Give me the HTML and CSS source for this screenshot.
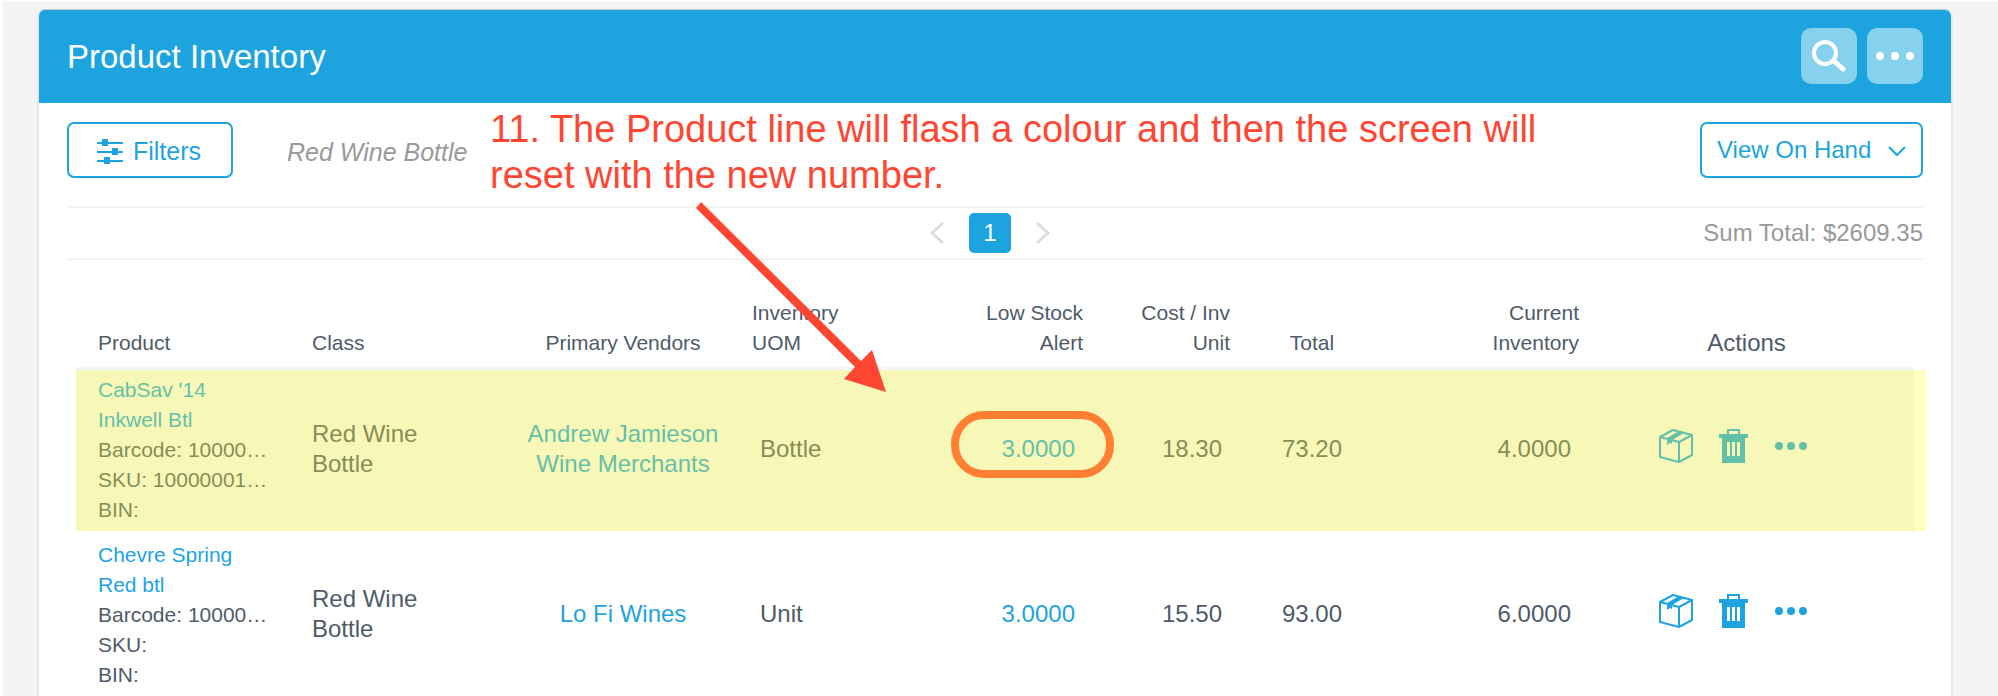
FILE: index.html
```html
<!DOCTYPE html>
<html lang="en">
<head>
  <meta charset="UTF-8">
  <meta name="viewport" content="width=device-width, initial-scale=1.0">
  <title>Product Inventory</title>
  <link rel="stylesheet" href="styles.css">
</head>
<body>

  <!-- Icons used more than once -->
  <svg class="icon-defs" aria-hidden="true">
    <symbol id="icon-box" viewBox="0 0 34 34">
      <path d="M14 1 L33 6 V26 L20 33 L1 28 V8 Z M1 8 L20 13 L33 6 M20 13 V33" fill="none" stroke="currentColor" stroke-width="2" stroke-linejoin="round"/>
      <path d="M8 9 L20 2 L25 4 L13 11 V15 L11 14 L8 16 Z" fill="currentColor"/>
    </symbol>
    <symbol id="icon-trash" viewBox="0 0 30 34">
      <path d="M8 5 V0 H21 V5 H29 V9 H26 V34 H3 V9 H0 V5 Z M10 2 V5 H19 V2 Z M8 13 V27 H11 V13 Z M13 13 V27 H16 V13 Z M18 13 V27 H21 V13 Z" fill="currentColor" fill-rule="evenodd"/>
    </symbol>
    <symbol id="icon-dots" viewBox="0 0 32 8">
      <circle cx="4" cy="4" r="4" fill="currentColor"/>
      <circle cx="16" cy="4" r="4" fill="currentColor"/>
      <circle cx="28" cy="4" r="4" fill="currentColor"/>
    </symbol>
  </svg>

  <div class="card">
    <header class="card-header">
      <h1>Product Inventory</h1>
      <div class="header-buttons">
        <button class="header-btn" type="button" aria-label="Search">
          <svg width="34" height="34" viewBox="0 0 34 34" fill="none" stroke="#fff">
            <circle cx="13" cy="14" r="11" stroke-width="4"/>
            <path d="M22 22 L31 30" stroke-width="5" stroke-linecap="round"/>
          </svg>
        </button>
        <button class="header-btn" type="button" aria-label="More">
          <svg width="38" height="8" viewBox="0 0 38 8" fill="#fff">
            <circle cx="4" cy="4" r="4"/>
            <circle cx="19" cy="4" r="4"/>
            <circle cx="34" cy="4" r="4"/>
          </svg>
        </button>
      </div>
    </header>

    <div class="toolbar">
      <button class="filter-btn" type="button">
        <svg width="26" height="25" viewBox="0 0 26 25" fill="currentColor">
          <path d="M0 3 H26 V5 H0 Z M0 12 H26 V14 H0 Z M0 21 H26 V23 H0 Z M5 0 H11 V7 H5 Z M15 9 H21 V16 H15 Z M7 18 H13 V25 H7 Z"/>
        </svg>
        Filters
      </button>
      <span class="active-filter">Red Wine Bottle</span>
      <div class="view-select">
        <select aria-label="View">
          <option>View On Hand</option>
        </select>
        <svg width="18" height="11" viewBox="0 0 18 11" fill="none" stroke="currentColor" stroke-width="2">
          <path d="M1 1 L9 9 L17 1"/>
        </svg>
      </div>
    </div>

    <div class="summary">
      <nav class="pager" aria-label="Pages">
        <button class="page-arrow" type="button" aria-label="Previous">
          <svg width="16" height="22" viewBox="0 0 16 22" fill="none" stroke="currentColor" stroke-width="3"><path d="M14 1 L3 11 L14 21"/></svg>
        </button>
        <a class="page-number" href="#">1</a>
        <button class="page-arrow" type="button" aria-label="Next">
          <svg width="16" height="22" viewBox="0 0 16 22" fill="none" stroke="currentColor" stroke-width="3"><path d="M2 1 L13 11 L2 21"/></svg>
        </button>
      </nav>
      <span class="sum-total">Sum Total: $2609.35</span>
    </div>

    <table class="inventory">
      <colgroup>
        <col class="col-product">
        <col class="col-class">
        <col class="col-vendor">
        <col class="col-uom">
        <col class="col-alert">
        <col class="col-cost">
        <col class="col-total">
        <col class="col-current">
        <col class="col-actions">
      </colgroup>
      <thead>
        <tr>
          <th>Product</th>
          <th>Class</th>
          <th class="center">Primary Vendors</th>
          <th>Inventory<br>UOM</th>
          <th class="right">Low Stock<br>Alert</th>
          <th class="right">Cost / Inv<br>Unit</th>
          <th class="center">Total</th>
          <th class="right">Current<br>Inventory</th>
          <th class="center actions-head">Actions</th>
        </tr>
      </thead>
      <tbody>
        <tr class="flash">
          <td class="product">
            <a href="#">CabSav '14<br>Inkwell Btl</a>
            <div>Barcode: 10000…</div>
            <div>SKU: 10000001…</div>
            <div>BIN:</div>
          </td>
          <td>Red Wine<br>Bottle</td>
          <td class="center"><a href="#">Andrew Jamieson<br>Wine Merchants</a></td>
          <td class="uom">Bottle</td>
          <td class="number marked"><a href="#">3.0000</a></td>
          <td class="number">18.30</td>
          <td class="center">73.20</td>
          <td class="number">4.0000</td>
          <td>
            <div class="actions">
              <button type="button" aria-label="Stock"><svg width="34" height="34"><use href="#icon-box"/></svg></button>
              <button type="button" aria-label="Delete"><svg width="30" height="34"><use href="#icon-trash"/></svg></button>
              <button type="button" aria-label="More"><svg width="32" height="8"><use href="#icon-dots"/></svg></button>
            </div>
          </td>
        </tr>
        <tr>
          <td class="product">
            <a href="#">Chevre Spring<br>Red btl</a>
            <div>Barcode: 10000…</div>
            <div>SKU:</div>
            <div>BIN:</div>
          </td>
          <td>Red Wine<br>Bottle</td>
          <td class="center"><a href="#">Lo Fi Wines</a></td>
          <td class="uom">Unit</td>
          <td class="number"><a href="#">3.0000</a></td>
          <td class="number">15.50</td>
          <td class="center">93.00</td>
          <td class="number">6.0000</td>
          <td>
            <div class="actions">
              <button type="button" aria-label="Stock"><svg width="34" height="34"><use href="#icon-box"/></svg></button>
              <button type="button" aria-label="Delete"><svg width="30" height="34"><use href="#icon-trash"/></svg></button>
              <button type="button" aria-label="More"><svg width="32" height="8"><use href="#icon-dots"/></svg></button>
            </div>
          </td>
        </tr>
      </tbody>
    </table>
  </div>

  <!-- Step note and arrow, drawn over the page -->
  <p class="note">11. The Product line will flash a colour and then the screen will<br>reset with the new number.</p>
  <svg class="arrow" width="190" height="190" viewBox="0 0 190 190">
    <path d="M5 0 L165 159 L176 148 L190 190 L148 177 L159 165 L0 6 Z" fill="#ff4633"/>
  </svg>

</body>
</html>
```
FILE: styles.css
```css
*,
*::after {
  box-sizing: border-box;
}
body {
  font-family: "Liberation Sans", Arial, sans-serif;
  font-size: 24px;
  line-height: 30px;
  margin: 0;
  padding: 8px 45px 0 34px;
  height: 100vh;
  overflow: hidden;
  border-top: 1px solid #fff;
  border-left: 3px solid #fff;
  background-color: #f4f4f4;
  color: #4f5b69;
  position: relative;
}
a {
  color: #1da4df;
  text-decoration: none;
}
button {
  font: inherit;
  padding: 0;
  border: none;
  background: none;
  color: #1da4df;
  cursor: pointer;
}
svg {
  display: block;
}
.icon-defs {
  position: absolute;
  width: 0;
  height: 0;
}
.card {
  background-color: #fff;
  border: 2px solid #e6e6e6;
  border-top: 1px solid #c4cdd2;
  border-bottom: none;
  border-radius: 8px 8px 0 0;
}

/* Header */
.card-header {
  display: flex;
  justify-content: space-between;
  align-items: center;
  padding: 18px 28px 19px;
  background-color: #1da4df;
  border-radius: 6px 6px 0 0;
}
h1 {
  margin: 0;
  padding-top: 2px;
  font-size: 33px;
  font-weight: normal;
  color: #fff;
}
.header-buttons {
  display: flex;
  gap: 10px;
}
.header-btn {
  display: flex;
  justify-content: center;
  align-items: center;
  width: 56px;
  height: 56px;
  border-radius: 10px;
  background-color: #85d1ee;
}

/* Toolbar */
.toolbar {
  display: flex;
  align-items: center;
  padding: 19px 28px 28px;
}
.filter-btn {
  display: flex;
  justify-content: center;
  align-items: center;
  gap: 10px;
  width: 166px;
  height: 56px;
  padding: 2px 2px 0 0;
  border: 2px solid #1da4df;
  border-radius: 7px;
  font-size: 25px;
}
.active-filter {
  margin-left: 54px;
  padding-top: 4px;
  font-size: 25px;
  font-style: italic;
  color: #999;
}
.view-select {
  position: relative;
  margin-left: auto;
  color: #1da4df;
}
.view-select select {
  appearance: none;
  width: 223px;
  height: 56px;
  padding: 0 48px 0 15px;
  border: 2px solid #1da4df;
  border-radius: 7px;
  background-color: #fff;
  font: inherit;
  color: inherit;
}
.view-select svg {
  position: absolute;
  top: 24px;
  right: 17px;
  pointer-events: none;
}

/* Pages and total */
.summary {
  display: grid;
  grid-template-columns: 1fr auto 1fr;
  align-items: center;
  height: 54px;
  margin: 0 28px;
  border-top: 2px solid #f4f4f4;
  border-bottom: 2px solid #f4f4f4;
}
.pager {
  grid-column: 2;
  display: flex;
  align-items: center;
  gap: 24px;
  padding-right: 10px;
}
.page-arrow {
  color: #ddd;
}
.page-number {
  width: 42px;
  padding: 5px 0;
  border-radius: 5px;
  background-color: #1da4df;
  color: #fff;
  text-align: center;
}
.sum-total {
  justify-self: end;
  color: #999;
}

/* Inventory table */
.inventory {
  width: calc(100% - 74px);
  margin: 0 37px;
  table-layout: fixed;
  border-spacing: 0;
}
.col-product {
  width: 214px;
}
.col-class {
  width: 226px;
}
.col-vendor {
  width: 214px;
}
.col-uom {
  width: 184px;
}
.col-alert {
  width: 191px;
}
.col-cost {
  width: 147px;
}
.col-total {
  width: 120px;
}
.col-current {
  width: 229px;
}
th {
  padding: 38px 22px 9px;
  border-bottom: 3px solid #f4f4f4;
  font-size: 21px;
  font-weight: normal;
  text-align: left;
  vertical-align: bottom;
}
td {
  padding: 4px 22px 7px;
  border-bottom: 4px solid #fff;
}
.product {
  padding-top: 5px;
  padding-bottom: 6px;
  font-size: 21px;
  white-space: nowrap;
}
.center {
  padding-left: 0;
  padding-right: 0;
  text-align: center;
}
.right {
  text-align: right;
}
.uom {
  padding-left: 30px;
}
.number {
  padding-right: 30px;
  text-align: right;
}
.actions-head {
  padding-right: 22px;
  font-size: 24px;
}
.actions {
  display: flex;
  align-items: center;
  gap: 26px;
  padding: 0 0 6px 36px;
}

/* Updated row: hover grey under a see-through yellow */
.flash {
  position: relative;
}
.flash td {
  background-color: #f4f4f4;
}
.flash .product::after {
  content: "";
  position: absolute;
  top: 0;
  right: -12px;
  bottom: 4px;
  left: 0;
  z-index: 1;
  background-color: rgba(255, 254, 50, 0.31);
  pointer-events: none;
}
.flash td {
  background-clip: padding-box;
}
.marked {
  position: relative;
}
.marked::after {
  content: "";
  position: absolute;
  z-index: 2;
  top: 41px;
  right: -9px;
  width: 163px;
  height: 67px;
  border: 8px solid #ff8033;
  border-radius: 33px;
  pointer-events: none;
}

/* Notes on top */
.note {
  position: absolute;
  top: 105px;
  left: 487px;
  margin: 0;
  font-size: 38px;
  line-height: 46px;
  white-space: nowrap;
  color: #ff4633;
}
.arrow {
  position: absolute;
  z-index: 3;
  top: 201px;
  left: 693px;
  pointer-events: none;
}
```
